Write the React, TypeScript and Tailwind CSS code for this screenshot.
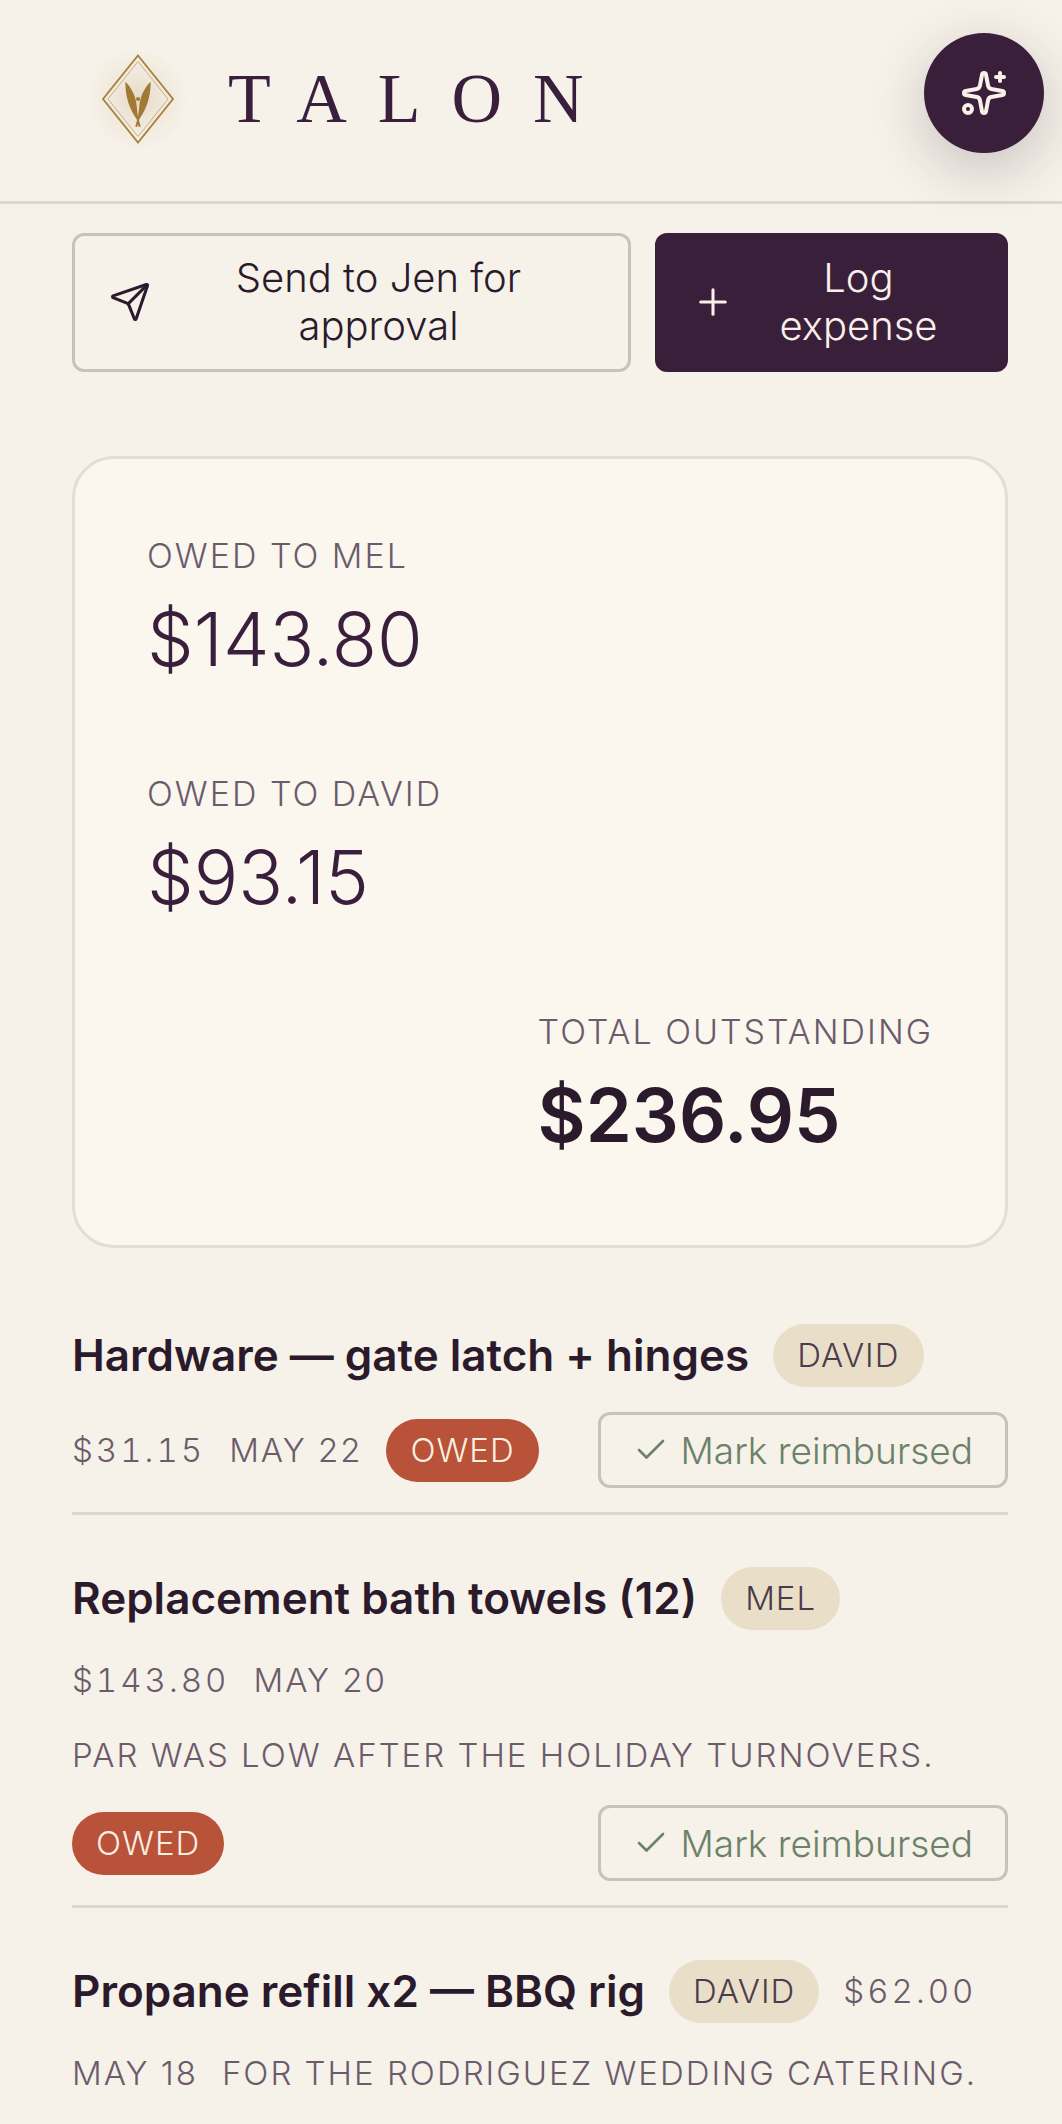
import React, { useState } from "react";
import { Check, Plus, Send, Sparkles } from "lucide-react";

type Expense = {
  id: number;
  title: string;
  person: string;
  amount: string;
  date: string;
  note?: string;
  owed?: boolean;
};

const expenses: Expense[] = [
  { id: 1, title: "Hardware — gate latch + hinges", person: "David", amount: "$31.15", date: "May 22", owed: true },
  {
    id: 2,
    title: "Replacement bath towels (12)",
    person: "Mel",
    amount: "$143.80",
    date: "May 20",
    note: "Par was low after the holiday turnovers.",
    owed: true,
  },
  {
    id: 3,
    title: "Propane refill x2 — BBQ rig",
    person: "David",
    amount: "$62.00",
    date: "May 18",
    note: "For the Rodriguez wedding catering.",
  },
];

const Logo = () => (
  <svg viewBox="-66 -66 132 132" className="size-[132px] shrink-0" aria-hidden="true">
    <defs>
      <radialGradient id="glow">
        <stop offset="0" stopColor="#a8803a" stopOpacity="0.2" />
        <stop offset="0.5" stopColor="#a8803a" stopOpacity="0.08" />
        <stop offset="1" stopColor="#a8803a" stopOpacity="0" />
      </radialGradient>
    </defs>
    <circle r="50" fill="url(#glow)" />
    <path d="M0 -43.5 35 0 0 43.5 -35 0Z" fill="none" stroke="#a8803a" strokeWidth="1.8" />
    <path d="M0 -37.5 30 0 0 37.5 -30 0Z" fill="none" stroke="#a8803a" strokeOpacity="0.55" strokeWidth="1" />
    <g fill="#a07a35">
      <path d="M-12.700 -17.300C-7 -12 -3.500 -5 -1.800 3 -1 9 -0.600 14 0.300 19.500L2.800 27.500 0.800 28 -1.200 20.500C-8 10 -12.500 0 -12.700 -17.300Z" />
      <path d="M12.700 -17.300C7 -12 3.500 -5 1.800 3 1 9 0.600 14 -0.300 19.500L-2.800 27.500 -0.800 28 1.200 20.500C8 10 12.500 0 12.700 -17.300Z" />
      <circle r="2" />
    </g>
  </svg>
);

const Balance = ({ label, value, total }: { label: string; value: string; total?: boolean }) => (
  <div className={total ? "ml-auto" : ""}>
    <p className="text-[34px] leading-[50px] font-light tracking-[2px] text-[#6b5b6b] uppercase">{label}</p>
    <p
      className={
        total
          ? "text-[74px] leading-[116px] font-semibold text-[#2a1a2b]"
          : "text-[74px] leading-[116px] font-light text-[#3a1f3d]"
      }
    >
      {value}
    </p>
  </div>
);

const ExpenseRow = ({ expense }: { expense: Expense }) => {
  const [reimbursed, setReimbursed] = useState(false);

  return (
    <li className="flex flex-wrap items-center gap-6 border-b-3 border-[#dcd7d0] pt-[50px] pb-6 text-[33px] leading-[51px] font-light text-[#6b5b6b] last:border-b-0 last:pb-0">
      <h2 className="text-[44px] leading-[66px] font-semibold text-[#2a1a2b]">{expense.title}</h2>
      <span className="rounded-full bg-[#e9dfc9] px-6 py-[6px] tracking-[1px] text-[#4d3b4d] uppercase">
        {expense.person}
      </span>
      <span className="tracking-[3px] tabular-nums">{expense.amount}</span>
      <span className="tracking-[2px] uppercase">{expense.date}</span>
      {expense.note && <span className="tracking-[2px] uppercase">{expense.note}</span>}
      {expense.owed && !reimbursed && (
        <>
          <span className="rounded-full bg-[#b85238] px-6 py-[6px] tracking-[1px] text-[#fbeee2] uppercase">Owed</span>
          <button
            type="button"
            onClick={() => setReimbursed(true)}
            className="ml-auto flex h-[76px] items-center gap-3 rounded-xl border-3 border-[#c8c2be] px-8 text-[37px] text-[#6b8268]"
          >
            <Check size={36} strokeWidth={1.75} />
            Mark reimbursed
          </button>
        </>
      )}
    </li>
  );
};

const App = () => {
  return (
    <div className="min-h-screen bg-[#f6f1e9] font-['Inter',sans-serif]">
      <header className="flex h-[204px] items-center gap-6 border-b-3 border-[#dcd7d0] px-[72px] pb-1">
        <Logo />
        <h1 className="font-['Liberation_Serif',serif] text-[70px] leading-none tracking-[31px] text-[#3a1f3d]">TALON</h1>
      </header>

      {/* Floating assistant button */}
      <button
        type="button"
        aria-label="Open assistant"
        className="fixed top-[33px] right-[18px] flex size-[120px] items-center justify-center rounded-full bg-[#3a1f3a] text-[#faf0ea] shadow-[0_16px_56px_rgba(42,26,43,0.22)]"
      >
        <Sparkles size={48} />
      </button>

      <main className="pt-[29px] pr-[54px] pl-[72px]">
        <div className="grid grid-cols-[19fr_12fr] gap-6 text-[40px] leading-[48px] font-light">
          <button
            type="button"
            className="flex items-center gap-3 rounded-xl border-3 border-[#c8c2be] px-[34px] pt-[18px] pb-[19px] text-[#2a1a2b]"
          >
            <Send size={42} strokeWidth={1.75} className="shrink-0" />
            <span className="flex-1 px-6">Send to Jen for approval</span>
          </button>
          <button
            type="button"
            className="flex items-center gap-3 rounded-xl border-3 border-[#3a1f3a] bg-[#3a1f3a] px-[34px] pt-[18px] pb-[19px] text-[#faf0ea]"
          >
            <Plus size={42} strokeWidth={1.75} className="shrink-0" />
            <span className="flex-1">Log expense</span>
          </button>
        </div>

        <section className="mt-[84px] flex flex-col gap-[72px] rounded-[42px] border-3 border-[#e2ddd6] bg-[#fbf6ee] p-[72px]">
          <Balance label="Owed to Mel" value="$143.80" />
          <Balance label="Owed to David" value="$93.15" />
          <Balance label="Total outstanding" value="$236.95" total />
        </section>

        <ul className="mt-6">
          {expenses.map((expense) => (
            <ExpenseRow key={expense.id} expense={expense} />
          ))}
        </ul>
      </main>
    </div>
  );
};

export default App;
